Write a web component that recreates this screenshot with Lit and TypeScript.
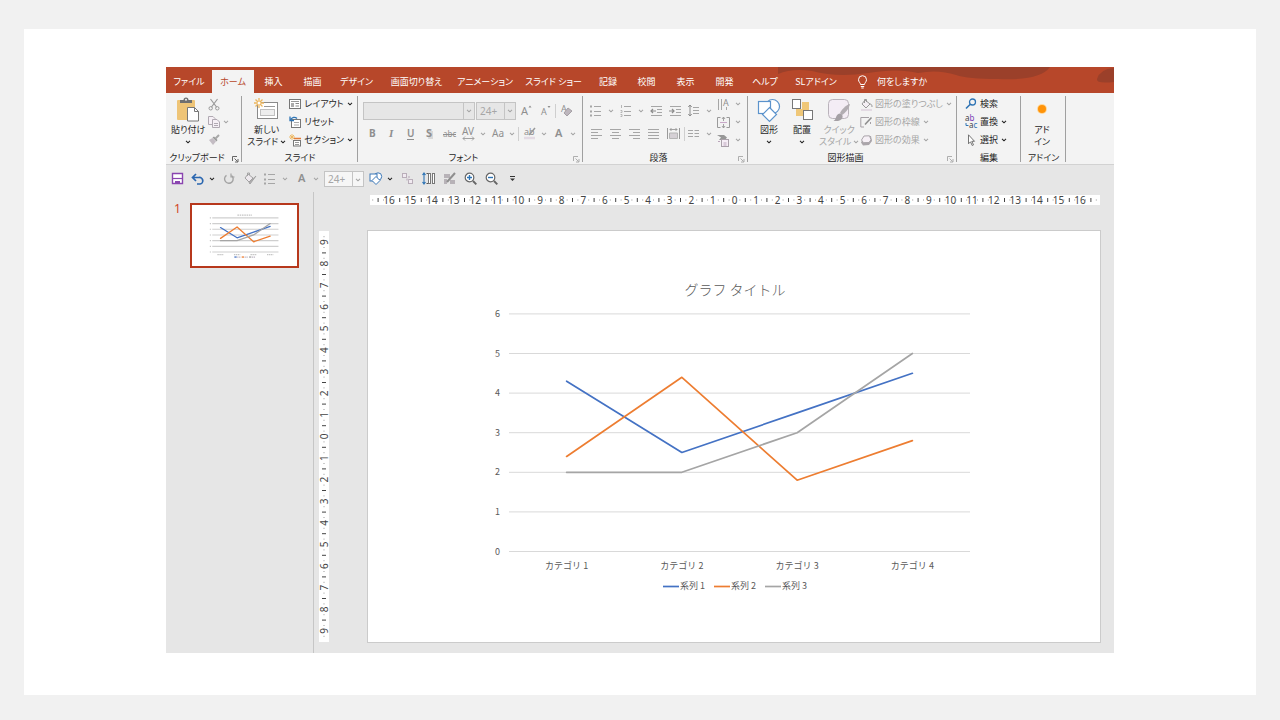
import { LitElement, html, svg, css, nothing, TemplateResult } from "lit";
import { customElement, property } from "lit/decorators.js";

type Part = TemplateResult | typeof nothing;

const ic = (w: number, h: number, body: unknown) =>
  html`<svg class="ic" width=${w} height=${h} viewBox="0 0 ${w} ${h}" fill="none" aria-hidden="true">${body}</svg>`;

const chev = html`<svg class="chev" width="6" height="4" viewBox="0 0 6 4" fill="none" aria-hidden="true"><path d="M1 .8 3 2.8 5 .8" stroke="currentColor" stroke-width="1.1"/></svg>`;

const G = "#a6a6a6";
const lines = (rows: number[][]) => svg`<path d=${rows.map(([x1, x2, y]) => `M${x1} ${y}H${x2}`).join("")} stroke=${G}/>`;
const letter = (x: number, y: number, t: string, size = 10, weight = 400) =>
  svg`<text x=${x} y=${y} font-size=${size} font-weight=${weight} fill="#8f8f8f" font-family="Noto Sans, sans-serif">${t}</text>`;

const icons = {
  paste: ic(26, 26, svg`<rect x="2" y="3" width="18" height="20" rx="1" fill="#eec477"/><path d="M5 6V3h3.500a2.500 2.500 0 0 1 5 0H17v3z" fill="#6f6f6f"/><circle cx="11" cy="2.800" r="1" fill="#f3f3f3"/><path d="M12.500 10.500h7l4 4V24h-11z" fill="#fff" stroke="#777"/><path d="M19.500 10.500v4h4" stroke="#777"/>`),
  cut: ic(12, 13, svg`<path d="M2.500 1 8.500 9M9.500 1 3.500 9" stroke="#9a9a9a" stroke-width="1.200"/><circle cx="2.700" cy="10.300" r="1.700" stroke="#9a9a9a"/><circle cx="9.300" cy="10.300" r="1.700" stroke="#9a9a9a"/>`),
  copy: ic(12, 12, svg`<path d="M.5.5h4.500l2 2V8.500H.5z" fill="#f6f0f6" stroke="#b0a9b2"/><path d="M4.500 3.500H9l2.500 2.500v5.500h-7z" fill="#f6f0f6" stroke="#b0a9b2"/><path d="M6 7.500h4M6 9.500h4" stroke="#b0a9b2"/>`),
  brush: ic(12, 12, svg`<path d="M1 6 5 11 8 7.500 4.500 4z" fill="#c3bcc3"/><path d="M4.500 3.500 8.500 7.500 9.500 6 6 2.500z" fill="#999"/><path d="m7.500 4.500 3.500-3.500" stroke="#a8a8a8" stroke-width="2"/>`),
  newSlide: ic(25, 24, svg`<rect x="3.500" y="4.500" width="20" height="16" fill="#fff" stroke="#8a8a8a"/><path d="M10 8.500h11" stroke="#999"/><rect x="6.500" y="11.500" width="14" height="6" fill="#eee" stroke="#c0c0c0"/><path d="M5 0v10M0 5h10M1.500 1.500l7 7M8.500 1.500l-7 7" stroke="#edb65c" stroke-width="1.300"/><circle cx="5" cy="5" r="1.500" fill="#fff"/>`),
  layout: ic(12, 12, svg`<rect x=".5" y="1.500" width="11" height="9" fill="#fff" stroke="#777"/><path d="M2 3.500h8" stroke="#999"/><rect x="2" y="5" width="3" height="4" fill="#aaa"/><path d="M6.500 5.500H10M6.500 8H10" stroke="#888"/>`),
  reset: ic(12, 12, svg`<rect x="2.500" y="3.500" width="9" height="8" fill="#fff" stroke="#777"/><path d="M5 6.500h5M5 9h5" stroke="#aaa"/><path d="M1 .5v4h4M1.500 4C3 1 6 .5 8 2.500" stroke="#2e74b5" stroke-width="1.300"/>`),
  section: ic(12, 13, svg`<path d="M5 4.500h7" stroke="#e07b39" stroke-width="1.500"/><rect x="4.500" y="6.500" width="7" height="5.500" fill="#fff" stroke="#777"/><path d="M6 8.500h4M6 10.500h4" stroke="#999"/><path d="M3 0v6M0 3h6M1 1l4 4M5 1 1 5" stroke="#edb65c" stroke-width=".9"/>`),
  grow: ic(13, 14, svg`${letter(1, 11, "A", 11)}<path d="m8.500 3.500 1.500-2 1.500 2z" fill="#8f8f8f"/>`),
  shrink: ic(13, 14, svg`${letter(2, 11, "A", 9)}<path d="m8.500 2 1.500 2 1.500-2z" fill="#8f8f8f"/>`),
  clear: ic(13, 14, svg`${letter(1, 8, "A", 9)}<path d="m4 9 4-5 4 3-5 5z" fill="#bdb6bd" stroke="#a5a0a5"/>`),
  bold: ic(13, 14, letter(3, 10, "B", 10, 700)),
  italic: ic(13, 14, svg`<text x="4" y="10" font-size="11" font-weight="700" font-style="italic" fill="#8f8f8f" font-family="Liberation Serif, serif">I</text>`),
  underline: ic(13, 14, svg`${letter(3, 10, "U", 10, 600)}<path d="M3 12.500h7" stroke="#8f8f8f"/>`),
  shadow: ic(13, 14, svg`<path d="M6 4h4v8H5z" fill="#d8d8d8"/>${letter(3, 10, "S", 11, 700)}`),
  strike: ic(15, 14, svg`${letter(1, 10, "abc", 8)}<path d="M1 7.500h13" stroke="#8f8f8f"/>`),
  spacing: ic(13, 14, svg`${letter(0, 8, "AV", 10)}<path d="M1 11.500h11M3 9.500l-2 2 2 2M10 9.500l2 2-2 2" stroke="#9a9a9a" stroke-width=".9"/>`),
  caseAa: ic(14, 14, letter(1, 10, "Aa", 10)),
  highlight: ic(14, 14, svg`${letter(1, 8, "ab", 9)}<path d="m6 8 6-7" stroke="#999" stroke-width="1.500"/><path d="M1 11h11" stroke="#e3dae3" stroke-width="2.500"/>`),
  fontColor: ic(13, 14, letter(3, 10, "A", 11, 600)),
  bullets: ic(12, 12, svg`${lines([[4, 11, 1.5], [4, 11, 6.5], [4, 11, 10.5]])}<path d="M0 1.500h2M0 6.500h2M0 10.500h2" stroke=${G} stroke-width="2"/>`),
  numbers: ic(12, 12, svg`${lines([[4, 11, 1.5], [4, 11, 6.5], [4, 11, 10.5]])}<path d="M1.500 0v3M.5 5.500h1.500v2H.5M.5 9.500H2v2H.5" stroke=${G} stroke-width=".8"/>`),
  outdent: ic(13, 12, svg`${lines([[1, 12, 1.5], [7, 12, 4.5], [7, 12, 7.5], [1, 12, 10.5]])}<path d="M6 6H1M3 4 1 6l2 2" stroke="#8c8c8c" stroke-width="1.200"/>`),
  indent: ic(13, 12, svg`${lines([[1, 12, 1.5], [7, 12, 4.5], [7, 12, 7.5], [1, 12, 10.5]])}<path d="M0 6h5M3 4l2 2-2 2" stroke="#8c8c8c" stroke-width="1.200"/>`),
  leading: ic(12, 13, svg`${lines([[5, 11, 3.5], [5, 11, 6.5], [5, 11, 9.5]])}<path d="M2 1v11M.3 3 2 1l1.700 2M.3 10 2 12l1.700-2" stroke="#8c8c8c"/>`),
  left: ic(12, 12, lines([[0, 11, 1.5], [0, 7, 4.5], [0, 11, 7.5], [0, 7, 10.5]])),
  center: ic(12, 12, lines([[0, 11, 1.5], [2, 9, 4.5], [0, 11, 7.5], [2, 9, 10.5]])),
  right: ic(12, 12, lines([[0, 11, 1.5], [4, 11, 4.5], [0, 11, 7.5], [4, 11, 10.5]])),
  justify: ic(12, 12, lines([[0, 11, 1.5], [0, 11, 4.5], [0, 11, 7.5], [0, 11, 10.5]])),
  distribute: ic(13, 13, svg`<path d="M.5 1v11M12.500 1v11" stroke="#999"/><path d="M3 2.500h7M4.500 1 3 2.500 4.500 4M8.500 1 10 2.500 8.500 4" stroke="#8c8c8c" stroke-width=".8"/><path d="M2.500 6h8v5.500h-8z" fill="#d5d0d5" stroke="#b5b5b5"/>`),
  columns: ic(12, 12, lines([[0, 5, 2.5], [0, 5, 5.5], [0, 5, 8.5], [6.5, 11, 2.5], [6.5, 11, 5.5], [6.5, 11, 8.5]])),
  textDir: ic(13, 13, svg`<path d="M1.500 1v11M4.500 1v11" stroke=${G}/>${letter(6, 8, "A", 9)}<path d="M9.500 9v3" stroke=${G}/>`),
  alignText: ic(13, 13, svg`<path d="M3.500 1.500h-3v10h3M9.500 1.500h3v10h-3" stroke="#9a9a9a"/><path d="M3 6.500h7" stroke="#c9a9c9"/><path d="M6.500 1v4M5 3l1.500-2L8 3M6.500 12V8M5 10l1.500 2L8 10" stroke="#9a9a9a" stroke-width=".9"/>`),
  smartArt: ic(13, 13, svg`<path d="M0 1h7l3 2.500L8 6H2l2-2.500z" fill="#979797"/><rect x="4.500" y="5.500" width="7" height="7" fill="#f5edf5" stroke="#a9a0a9"/><path d="M6.500 9h3M6.500 11h3M1 7.500h2" stroke="#bba5bb"/>`),
  shapes: ic(24, 24, svg`<circle cx="15.500" cy="8.500" r="7" fill="#fff" stroke="#5b93cc" stroke-width="1.200"/><rect x="1.500" y="3.500" width="12" height="12" fill="#fff" stroke="#5b93cc" stroke-width="1.200"/><path d="m12.500 9.500 7 7-7 7-7-7z" fill="#fff" stroke="#5b93cc" stroke-width="1.200"/>`),
  arrange: ic(23, 24, svg`<path d="M11 4h7v9h-6v5H5v-7h6z" fill="#efc778"/><rect x="1.500" y="1.500" width="8" height="9" fill="#fff" stroke="#777"/><rect x="12.500" y="12.500" width="9" height="9" fill="#fff" stroke="#777"/>`),
  quick: ic(25, 25, svg`<rect x="1.500" y="1.500" width="20" height="19" rx="4" fill="#f4edf5" stroke="#bab3bb"/><path d="M23 6c-1 5-5 9-8 11l-2-2c2-4 6-8 10-9z" fill="#b2adb2"/><path d="M13 15.500c2 .5 3 2 2.500 4-1 3-4.500 4-9 3.500 2-1 2-3 3-5 .8-1.500 2-2.500 3.500-2.500z" fill="#a5a0a5"/>`),
  fill: ic(12, 13, svg`<path d="m5 2 5 4-4 4-4-4z" fill="#f4eff4" stroke="#999"/><path d="M4.500 5V1.500h2V4M10 6c1.500 0 2 1 2 3" stroke="#999"/><path d="M1 12h11" stroke="#e3dae3" stroke-width="2"/>`),
  outline: ic(12, 13, svg`<path d="M9 1.500H.8v9.500H4M10.500 6V8" stroke="#a5a0a5"/><path d="m5 8.500 6.500-7" stroke="#8f8f8f" stroke-width="1.600"/>`),
  effect: ic(12, 13, svg`<path d="m4 2.500 7-.5 1 5-3 4-6 .500-2-3z" fill="#aaa5aa"/><path d="m4 2 5.500-.2 1.500 4L9 8.500l-5.500.2L1.500 6z" fill="#f6f0f6" stroke="#aaa5aa"/>`),
  find: ic(12, 12, svg`<circle cx="7.500" cy="4" r="3" stroke="#2e74b5" stroke-width="1.300"/><path d="M5.300 6.300 1 10.500" stroke="#2e74b5" stroke-width="1.600"/>`),
  replace: ic(12, 13, svg`<g font-size="8" font-family="Noto Sans, sans-serif" fill="#444"><text x="0" y="5">a<tspan fill="#7a3db8">b</tspan></text><text x="4" y="12">a<tspan fill="#2e74b5">c</tspan></text></g><path d="M1 7v2.500h2.500" stroke="#2e74b5"/>`),
  select: ic(12, 12, svg`<path d="M3.500.8v9l2-2 1.700 3.700 1.300-.6L6.800 7.300h2.700z" fill="#fff" stroke="#666" stroke-width=".9"/>`),
  addin: ic(24, 24, svg`<circle cx="12" cy="11" r="5" fill="#ffd79a"/><circle cx="12" cy="11" r="4" fill="#ff9308"/>`),
  bulb: ic(11, 14, svg`<path d="M3.500 9.500C3.500 7.800 1.500 7 1.500 4.700a4 4 0 0 1 8 0c0 2.300-2 3.100-2 4.800zM3.800 11.500h3.400M4.300 13h2.400" stroke="#fff"/>`),
  launch: ic(7, 7, svg`<path d="M.5 5V.5H5M2.500 2.500l3 3M6 3v3H3" stroke="currentColor" stroke-width=".9"/>`),
  save: ic(13, 13, svg`<path d="M1.500 1.500h10v10h-10z" fill="#fff" stroke="#8a45b0" stroke-width="1.400"/><path d="M2 6.500h9" stroke="#8a45b0" stroke-width="1.200"/><path d="M4 9h5v3H4z" fill="#8a45b0"/>`),
  undo: ic(13, 12, svg`<path d="M5 1 1.500 4.500 5 8M1.500 4.500H8a3 3 0 0 1 1 6.500H6" stroke="#2b67b0" stroke-width="1.700"/>`),
  redo: ic(12, 12, svg`<path d="M8.500 2.500a4.300 4.300 0 1 1-5-.2" stroke="#a3a3a3" stroke-width="1.400"/><path d="M8 .5v3.500h3.500" stroke="#a3a3a3" stroke-width="1.200"/>`),
  bucket: ic(13, 13, svg`<path d="m4 2 5 4-4 4-4-4z" fill="#eee9ee" stroke="#a3a3a3"/><path d="M3.500 4V1h2v2" stroke="#a3a3a3"/><path d="m12 4-6 8-1-1.500z" fill="#b5b0b5" stroke="#a3a3a3"/>`),
  miniShapes: ic(14, 13, svg`<circle cx="9" cy="4.500" r="3.700" fill="#fff" stroke="#3c78b8"/><rect x="1" y="2" width="7" height="7" fill="#fff" stroke="#3c78b8"/><path d="m7 4.500 4 4-4 4-4-4z" fill="#fff" stroke="#3c78b8"/>`),
  group: ic(13, 13, svg`<rect x="1.500" y="1.500" width="4" height="4" fill="#f1eaf1" stroke="#b9aeb9"/><rect x="7.500" y="7.500" width="4" height="4" fill="#f1eaf1" stroke="#b9aeb9"/><path d="M5 6.500h2.500v2H5zM7 4h2v2H7z" fill="#cfc5cf"/>`),
  guides: ic(13, 13, svg`<path d="M2 1v11M.5 3 2 1l1.500 2M.5 10 2 12l1.500-2" stroke="#2e74b5" stroke-width="1.100"/><path d="M4.500 1.500h2M4.500 11.500h2" stroke="#555"/><rect x="6.500" y="1.500" width="2" height="10" fill="#fff" stroke="#777"/><rect x="10.500" y="1.500" width="2" height="10" fill="#fff" stroke="#777"/>`),
  align: ic(13, 13, svg`<path d="M1 2h6v4H1zM1 7h3v5H1zM7 8h5v4H7z" fill="#b7b2b7"/><path d="M12 1 4 10" stroke="#8f8f8f" stroke-width="2"/>`),
  zoomIn: ic(13, 13, svg`<circle cx="5.500" cy="5.500" r="4.300" fill="#fff" stroke="#666" stroke-width="1.200"/><path d="M5.500 3v5M3 5.500h5" stroke="#2e74b5" stroke-width="1.400"/><path d="m9 9 3.300 3.300" stroke="#666" stroke-width="1.900"/>`),
  zoomOut: ic(13, 13, svg`<circle cx="5.500" cy="5.500" r="4.300" fill="#fff" stroke="#666" stroke-width="1.200"/><path d="M3 5.500h5" stroke="#2e74b5" stroke-width="1.400"/><path d="m9 9 3.300 3.300" stroke="#666" stroke-width="1.900"/>`),
  more: ic(7, 7, svg`<path d="M1 1.500h5" stroke="#333"/><path d="M1 3.500h5L3.500 6z" fill="#333"/>`),
};

/* Data behind the line chart on the slide. */
const chart = {
  title: "グラフ タイトル",
  categories: ["カテゴリ 1", "カテゴリ 2", "カテゴリ 3", "カテゴリ 4"],
  series: [
    { name: "系列 1", color: "#4472c4", values: [4.3, 2.5, 3.5, 4.5] },
    { name: "系列 2", color: "#ed7d31", values: [2.4, 4.4, 1.8, 2.8] },
    { name: "系列 3", color: "#a5a5a5", values: [2, 2, 3, 5] },
  ],
  max: 6,
};

@customElement("line-chart")
class LineChart extends LitElement {
  @property({ type: Boolean }) mini = false;

  static styles = css`
    :host { display: block; font-feature-settings: normal; }
    svg { display: block; width: 100%; height: auto; }
    text { font-family: "Noto Sans CJK JP", sans-serif; fill: #595959; font-size: 9px; }
    .title { font-size: 14px; font-weight: 300; }
  `;

  render() {
    const left = 141, right = 602, bottom = 320.5, step = 39.6;
    const slot = (right - left) / chart.categories.length;
    const y = (v: number) => bottom - v * step;
    const x = (i: number) => left + slot * (i + 0.5);
    const ticks = Array.from({ length: chart.max + 1 }, (_, i) => i);
    const full = !this.mini;
    return html`<svg viewBox="0 0 732 411" role="img" aria-label=${full ? chart.title : "スライド 1"}>
      ${full
        ? svg`<text class="title" x="367" y="64" text-anchor="middle">${chart.title}</text>`
        : svg`<path d="M316 64H418" stroke="#c4c4c4" stroke-width="9" stroke-dasharray="11 5"/>`}
      ${ticks.map((t) => svg`<path d="M${left} ${y(t)}H${right}" stroke=${full ? "#d9d9d9" : "#cfcfcf"} stroke-width=${full ? 1 : 8}/>
        ${full ? svg`<text x="132" y=${y(t) + 3} text-anchor="end">${t}</text>` : svg`<path d="M124 ${y(t)}h8" stroke="#c5c5c5" stroke-width="8"/>`}`)}
      ${chart.series.map((s) => svg`<polyline fill="none" stroke=${s.color} stroke-width=${full ? 1.7 : 9} stroke-linejoin="round" stroke-linecap="round"
        points=${s.values.map((v, i) => `${x(i)},${y(v)}`).join(" ")}/>`)}
      ${chart.categories.map((c, i) => full
        ? svg`<text x=${x(i)} y="338" text-anchor="middle">${c}</text>`
        : svg`<path d="M${x(i) - 22} 338h44" stroke="#c4c4c4" stroke-width="9" stroke-dasharray="10 4"/>`)}
      ${chart.series.map((s, i) => svg`<path d="M${295 + i * 51} 355.500h16" stroke=${s.color} stroke-width=${full ? 1.7 : 9}/>
        ${full ? svg`<text x=${312 + i * 51} y="358">${s.name}</text>` : svg`<path d="M${315 + i * 51} 355.500h26" stroke="#bdb5c2" stroke-width="9" stroke-dasharray="9 4"/>`}`)}
    </svg>`;
  }
}

@customElement("slide-ruler")
class SlideRuler extends LitElement {
  @property({ type: Number }) units = 16;
  @property({ type: Boolean }) vertical = false;

  static styles = css`
    :host { display: block; }
    svg { display: block; width: 100%; height: auto; background: #fff; overflow: visible; }
    text { font-family: "Noto Sans", sans-serif; font-size: 10px; fill: #444; text-anchor: middle; }
  `;

  render() {
    const len = this.vertical ? 411 : 730;
    const mid = this.vertical ? 205.5 : 364.5;
    const unit = 21.6;
    const tail = this.vertical ? 1 : 3;
    const parts: unknown[] = [];
    for (let q = -this.units * 4 - tail; q <= this.units * 4 + tail; q++) {
      const p = mid + (q * unit) / 4;
      const kind = ((q % 4) + 4) % 4;
      if (kind === 0) {
        const n = Math.abs(q / 4);
        parts.push(this.vertical
          ? svg`<text transform="translate(8.5 ${p}) rotate(-90)">${n}</text>`
          : svg`<text x=${p} y="8.5">${n}</text>`);
      } else if (kind === 2) {
        parts.push(this.vertical
          ? svg`<path d="M3 ${p}h4" stroke="#444"/>`
          : svg`<path d="M${p} 3v4" stroke="#444"/>`);
      } else {
        parts.push(this.vertical
          ? svg`<rect x="4.5" y=${p - 0.5} width="1" height="1" fill="#999"/>`
          : svg`<rect x=${p - 0.5} y="4.500" width="1" height="1" fill="#999"/>`);
      }
    }
    return html`<svg viewBox=${this.vertical ? `0 0 10 ${len}` : `0 0 ${len} 10`} aria-hidden="true">${parts}</svg>`;
  }
}

@customElement("app-root")
class AppRoot extends LitElement {
  static styles = css`
    :host {
      display: block;
      box-sizing: border-box;
      min-height: 100vh;
      padding: 29px 24px 25px;
      background: #f1f1f1;
      color: #262626;
      font-family: "Noto Sans CJK JP", sans-serif;
      font-size: 9px;
      line-height: 12px;
      font-feature-settings: "palt";
    }
    * { box-sizing: border-box; }
    button, select {
      font: inherit;
      font-feature-settings: inherit;
      color: inherit;
      background: none;
      border: 0;
      padding: 0;
      margin: 0;
      white-space: nowrap;
    }
    svg { display: block; flex: none; overflow: visible; }
    .card { background: #fff; padding: 38px 142px 42px; }
    .app { background: #e6e6e6; }

    .tabs { position: relative; display: grid; height: 26px; background: #b7472a; color: #fff; padding-top: 3px;
      grid-template-columns: 46px 42px 39px 39px 49px 71px 66px 71px 38px 39px 39px 39px 42px 60px 92px 1fr; }
    .tab { display: flex; align-items: center; justify-content: center; gap: 9px; position: relative; }
    .tab.active { background: #f3f3f3; color: #b7472a; }
    .decor { position: absolute; right: 0; top: 0; }

    .ribbon { display: grid; height: 72px; background: #f3f3f3; border-bottom: 1px solid #d2d2d2;
      grid-template-columns: 76px 116px 225px 165px 209px 64px 45px 1fr; }
    .group { position: relative; display: grid; grid-template-rows: 54px 14px; row-gap: 2px; padding-top: 2px; }
    .group::after { content: ""; position: absolute; right: 0; top: 3px; bottom: 3px; border-right: 1px solid #a0a0a0; }
    .body { display: flex; gap: 1px; padding: 0 5px; min-width: 0; }
    .loose .body { gap: 3px; }
    .inset .body { padding-left: 8px; }
    .label { display: flex; align-items: center; justify-content: center; }
    .has-launcher .label { padding-right: 14px; }
    .launcher { position: absolute; right: 3px; bottom: 2px; color: #555; }
    .off { color: #a6a6a6; }
    .big { display: grid; grid-template-rows: 28px 12px 12px; justify-items: center; align-items: center; min-width: 32px; padding-top: 1px; }
    .wide { width: 40px; }
    .line { display: flex; align-items: center; gap: 2px; }
    .stack { display: grid; grid-template-rows: repeat(3, 18px); align-items: center; justify-items: start; }
    .small { display: flex; align-items: center; gap: 3px; }
    .rows { display: grid; grid-template-rows: 18px 18px; row-gap: 5px; align-content: center; flex: 1; }
    .row { display: flex; align-items: center; justify-content: space-between; }
    .tool { display: flex; align-items: center; justify-content: center; width: 18px; height: 18px; }
    .drop { width: 28px; gap: 4px; justify-content: space-between; padding-right: 2px; padding-left: 2px; }
    .sep { width: 1px; height: 14px; background: #cfcfcf; }
    .combo { position: relative; display: flex; height: 18px; border: 1px solid #c4c4c4; background: #e6e6e6; color: #a6a6a6; }
    .combo select { appearance: none; width: 100%; padding-left: 3px; font-family: "Noto Sans", sans-serif; font-size: 10px; opacity: 1; }
    .combo::after { content: ""; position: absolute; right: 10px; top: 0; bottom: 0; border-left: 1px solid #c4c4c4; }
    .combo svg { position: absolute; right: 2px; top: 6px; }
    .face { width: 112px; }
    .size { width: 40px; }
    .gap { justify-content: flex-start; gap: 1px; }

    .quick { display: flex; align-items: center; height: 27px; padding: 0 2px; gap: 3px; }
    .quick .combo { background: #f6f6f6; height: 16px; }

    .work { display: grid; grid-template-columns: 148px 1fr; }
    .thumbs { display: grid; grid-template-columns: auto 1fr; align-content: start; gap: 9px; padding: 11px 14px 0 8px; border-right: 1px solid #c6c6c6; }
    .num { color: #d24726; font: 12px/12px "Noto Sans", sans-serif; }
    .thumb { background: #fff; border: 2px solid #b7381c; padding: 1px 0; }
    .editor { display: grid; grid-template-columns: 10px 1fr; column-gap: 38px; row-gap: 25px; padding: 3px 13px 10px 5px; align-items: start; }
    .hr { grid-column: 2; margin: 0 1px 0 3px; }
    .vr { margin-top: 1px; }
    .slide { background: #fff; border: 1px solid #cbcbcb; }
  `;

  private group(label: string, body: unknown, launcher = "", cls = "") {
    return html`<section class="group ${cls} ${launcher ? "has-launcher" : ""}" aria-label=${label}>
      <div class="body">${body}</div>
      <div class="label">${label}</div>
      ${launcher ? html`<button class="launcher ${launcher}" aria-label="${label}の詳細">${icons.launch}</button>` : nothing}
    </section>`;
  }

  private tool(icon: Part, name: string, drop = false) {
    return html`<button class="tool off ${drop ? "drop" : ""}" aria-label=${name}>${icon}${drop ? chev : nothing}</button>`;
  }

  private small(icon: Part, text: string, drop = false, off = false) {
    return html`<button class="small ${off ? "off" : ""}" aria-label=${text}>${icon}<span>${text}</span>${drop ? chev : nothing}</button>`;
  }

  private combo(cls: string, name: string, value: string) {
    return html`<label class="combo ${cls}"><select aria-label=${name} disabled><option>${value}</option></select>${chev}</label>`;
  }

  render() {
    const tabs = ["ファイル", "ホーム", "挿入", "描画", "デザイン", "画面切り替え", "アニメーション", "スライド ショー", "記録", "校閲", "表示", "開発", "ヘルプ", "SLアドイン"];
    const t = this.tool.bind(this);
    return html`<main class="card"><div class="app">
      <nav class="tabs">
        <svg class="decor" width="336" height="26" viewBox="0 0 336 26" aria-hidden="true">
          <path d="M0 7Q14 1 34 4Q60 11 90 6Q120 1 140 6Q160 2 178 8Q190 12 220 12Q262 14 272 0H0z" fill="#9b402a"/>
          <path d="M336 1Q322 2 319 12Q318 17 336 15z" fill="#9b402a"/>
        </svg>
        ${tabs.map((n, i) => html`<button class="tab ${i === 1 ? "active" : ""}">${n}</button>`)}
        <button class="tab">${icons.bulb}何をしますか</button>
      </nav>

      <div class="ribbon">
        ${this.group("クリップボード", html`
          <button class="big">${icons.paste}<span>貼り付け</span>${chev}</button>
          <div class="stack">
            <button class="small off" aria-label="切り取り">${icons.cut}</button>
            <button class="small off" aria-label="コピー">${icons.copy}${chev}</button>
            <button class="small off" aria-label="書式のコピー">${icons.brush}</button>
          </div>`, "on", "loose")}
        ${this.group("スライド", html`
          <button class="big wide">${icons.newSlide}<span>新しい</span><span class="line">スライド ${chev}</span></button>
          <div class="stack">
            ${this.small(icons.layout, "レイアウト", true)}
            ${this.small(icons.reset, "リセット")}
            ${this.small(icons.section, "セクション", true)}
          </div>`, "", "loose")}
        ${this.group("フォント", html`<div class="rows">
          <div class="row gap">${this.combo("face", "フォント名", "")}${this.combo("size", "フォント サイズ", "24+")}
            ${t(icons.grow, "拡大")}${t(icons.shrink, "縮小")}<span class="sep"></span>${t(icons.clear, "書式のクリア")}</div>
          <div class="row">${t(icons.bold, "太字")}${t(icons.italic, "斜体")}${t(icons.underline, "下線")}${t(icons.shadow, "影")}${t(icons.strike, "取り消し線")}
            ${t(icons.spacing, "文字の間隔", true)}${t(icons.caseAa, "文字種の変換", true)}<span class="sep"></span>${t(icons.highlight, "蛍光ペン", true)}${t(icons.fontColor, "フォントの色", true)}</div>
        </div>`, "off")}
        ${this.group("段落", html`<div class="rows">
          <div class="row">${t(icons.bullets, "箇条書き", true)}${t(icons.numbers, "段落番号", true)}${t(icons.outdent, "インデント解除")}${t(icons.indent, "インデント")}${t(icons.leading, "行間", true)}</div>
          <div class="row">${t(icons.left, "左揃え")}${t(icons.center, "中央揃え")}${t(icons.right, "右揃え")}${t(icons.justify, "両端揃え")}${t(icons.distribute, "均等割り付け")}<span class="sep"></span>${t(icons.columns, "段組み", true)}</div>
        </div>
        <div class="stack">${t(icons.textDir, "文字列の方向", true)}${t(icons.alignText, "文字の配置", true)}${t(icons.smartArt, "SmartArt", true)}</div>`, "off")}
        ${this.group("図形描画", html`
          <button class="big">${icons.shapes}<span>図形</span>${chev}</button>
          <button class="big">${icons.arrange}<span>配置</span>${chev}</button>
          <button class="big wide off">${icons.quick}<span>クイック</span><span class="line">スタイル ${chev}</span></button>
          <div class="stack">
            ${this.small(icons.fill, "図形の塗りつぶし", true, true)}
            ${this.small(icons.outline, "図形の枠線", true, true)}
            ${this.small(icons.effect, "図形の効果", true, true)}
          </div>`, "off")}
        ${this.group("編集", html`<div class="stack">
            ${this.small(icons.find, "検索")}
            ${this.small(icons.replace, "置換", true)}
            ${this.small(icons.select, "選択", true)}
          </div>`, "", "inset")}
        ${this.group("アドイン", html`<button class="big">${icons.addin}<span>アド</span><span>イン</span></button>`)}
      </div>

      <div class="quick">
        ${t(icons.save, "上書き保存")}
        <button class="tool drop" aria-label="元に戻す">${icons.undo}${chev}</button>
        ${t(icons.redo, "繰り返し")}${t(icons.bucket, "書式")}
        ${t(icons.bullets, "箇条書き", true)}${t(icons.fontColor, "フォントの色", true)}
        ${this.combo("size", "フォント サイズ", "24+")}
        <button class="tool drop" aria-label="図形">${icons.miniShapes}${chev}</button>
        ${t(icons.group, "グループ化")}${t(icons.guides, "配置")}${t(icons.align, "整列")}${t(icons.zoomIn, "拡大")}${t(icons.zoomOut, "縮小")}${t(icons.more, "その他")}
      </div>

      <div class="work">
        <aside class="thumbs"><span class="num">1</span><line-chart class="thumb" mini></line-chart></aside>
        <div class="editor">
          <slide-ruler class="hr" .units=${16}></slide-ruler>
          <slide-ruler class="vr" vertical .units=${9}></slide-ruler>
          <line-chart class="slide"></line-chart>
        </div>
      </div>
    </div></main>`;
  }
}
